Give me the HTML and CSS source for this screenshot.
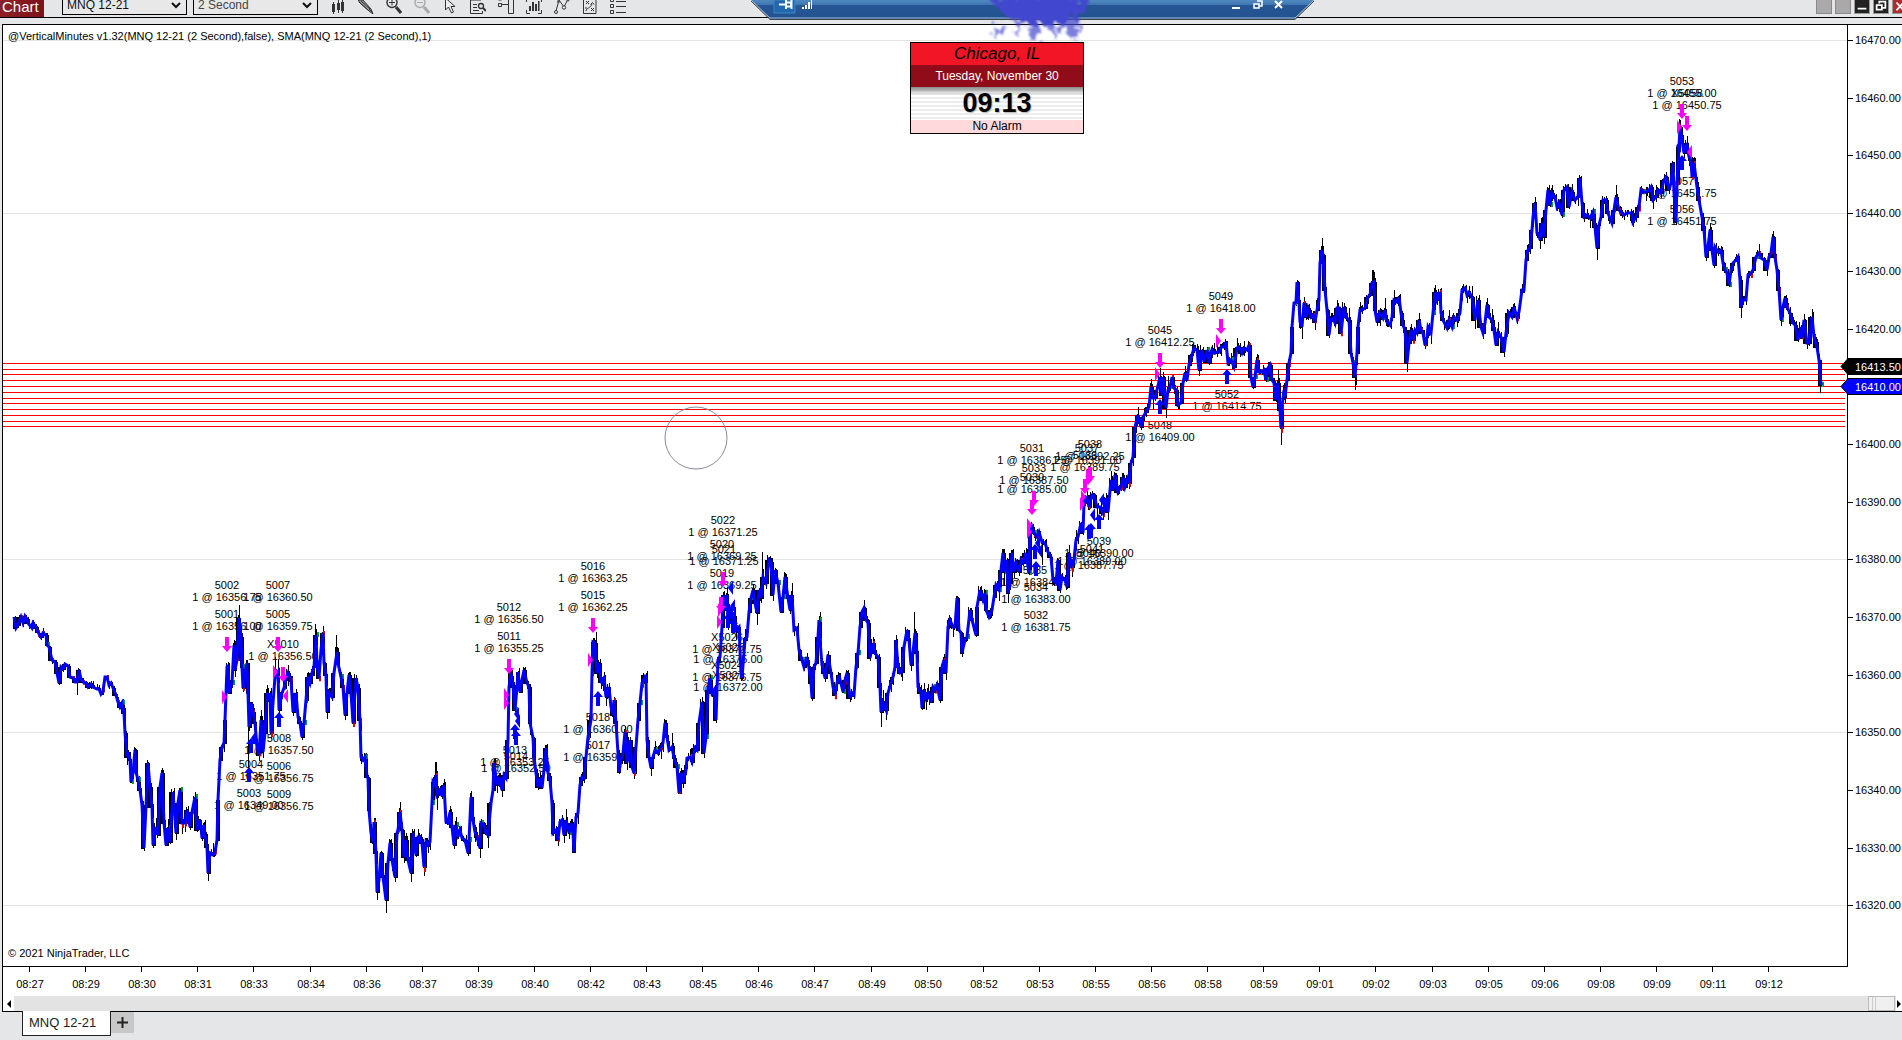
FILE: index.html
```html
<!DOCTYPE html>
<html lang="en">
<head>
<meta charset="utf-8">
<title>Chart - MNQ 12-21</title>
<link rel="stylesheet" href="styles.css">
</head>
<body>
<header class="toolbar">
  <h1 class="brand">Chart</h1>
  <div class="picker picker-first">
    <select aria-label="Instrument"><option>MNQ 12-21</option></select>
    <svg width="10" height="7" viewBox="0 0 10 7"><path d="M1 1l4 4 4-4" fill="none" stroke="#111" stroke-width="2"/></svg>
  </div>
  <div class="picker picker-muted">
    <select aria-label="Interval"><option>2 Second</option></select>
    <svg width="10" height="7" viewBox="0 0 10 7"><path d="M1 1l4 4 4-4" fill="none" stroke="#111" stroke-width="2"/></svg>
  </div>
  <nav class="tools" aria-label="Chart tools">
    <button aria-label="Bar style"><svg viewBox="0 0 16 14"><path d="M3.500 2v12M8.500 0v13M12.500 0v13" stroke="#333"/><path d="M2 4h3v8H2zM7 3h3v7H7zM11 2h3v9h-3z" fill="#333"/></svg></button>
    <button aria-label="Draw"><svg viewBox="0 0 16 14"><path d="M0 0l2 3 9 8 4 3-2-5L5 0z" fill="#999" stroke="#333"/><path d="M3 1l9 8M1 2l9 8M11 9l4 4" stroke="#333" fill="none"/></svg></button>
    <button aria-label="Zoom in"><svg viewBox="0 0 16 14"><circle cx="6" cy="2.500" r="5" fill="none" stroke="#333" stroke-width="1.400"/><path d="M3 2.500h6M6 0v5.500" stroke="#333"/><path d="M10 7l5 6" stroke="#333" stroke-width="3"/></svg></button>
    <button aria-label="Zoom out" disabled><svg viewBox="0 0 16 14"><circle cx="6" cy="2.500" r="5" fill="none" stroke="#aaa" stroke-width="1.400"/><path d="M3 2.500h6" stroke="#aaa"/><path d="M10 7l5 6" stroke="#aaa" stroke-width="3"/></svg></button>
    <button aria-label="Pointer"><svg viewBox="0 0 16 14"><path d="M3.500-2v12l3-3 3 6 2-1-2.500-5.500h4z" fill="#eee" stroke="#333"/></svg></button>
    <button aria-label="Data box"><svg viewBox="0 0 16 14"><path d="M11 0H.500v13.500h12V11M3 4.500h4M3 7.500h4M3 10.500h6" fill="none" stroke="#333"/><circle cx="11" cy="6" r="2.500" fill="none" stroke="#333" stroke-width="1.300"/><path d="M13 8l3 3" stroke="#333" stroke-width="2"/></svg></button>
    <button aria-label="Chart trader"><svg viewBox="0 0 16 14"><path d="M.500 3.500h3v3h-3zM.500-2v2h3v-2M4 4.500h6M10.500-1h5v14.500h-5z" fill="none" stroke="#333"/></svg></button>
    <button aria-label="Indicators"><svg viewBox="0 0 16 14"><path d="M.500 10v3.500H4M12 13.500h3.500V10M.500 2V0M15.500 2V0" fill="none" stroke="#333"/><path d="M3 6h2v5H3zM6 2h2v9H6zM9 4h2v7H9zM12 1h1.500v10H12z" fill="#333"/></svg></button>
    <button aria-label="Trend line"><svg viewBox="0 0 16 14"><path d="M2 11l3-11 5 7 4-8" fill="none" stroke="#333"/><circle cx="2" cy="12" r="1.500" fill="#eee" stroke="#333"/><circle cx="4.500" cy="1.500" r="1.500" fill="#555"/><circle cx="10" cy="7.500" r="1.700" fill="#eee" stroke="#333"/><circle cx="14" cy="0" r="1.500" fill="#555"/></svg></button>
    <button aria-label="Strategies"><svg viewBox="0 0 16 14"><path d="M1.500-1h12.500v14.500H1.500z" fill="none" stroke="#333"/><path d="M4 1l3 3M7 1L4 4M9 8l3 3M12 8l-3 3M4 11c0-3 5-3 6-7M8.500 4.500l2-2 1.500 2M4 7v2" fill="none" stroke="#333"/></svg></button>
    <button aria-label="Properties"><svg viewBox="0 0 16 14"><path d="M.500-1h3v2.500h-3zM.500 4.500h3v3h-3zM.500 10.500h3v3h-3z" fill="none" stroke="#333"/><path d="M6 1.500h10M6 6.500h10M6 12.500h10" stroke="#333"/></svg></button>
  </nav>
  <div class="window-buttons">
    <button class="plain" aria-label="Link instrument"></button>
    <button class="plain" aria-label="Link interval"></button>
    <button aria-label="Minimize"><svg viewBox="0 0 16 16"><path d="M3 11h10" stroke="#fff" stroke-width="2"/></svg></button>
    <button aria-label="Restore"><svg viewBox="0 0 16 16"><path d="M6 5V3h7v7h-3M3 7h6v5H3z" fill="none" stroke="#fff" stroke-width="2"/></svg></button>
    <button class="close" aria-label="Close"><svg viewBox="0 0 16 16"><path d="M4 4l8 9M12 4l-8 9" stroke="#fff" stroke-width="2"/></svg></button>
  </div>
</header>

<main class="chart">
  <svg id="plot" class="plot" role="img" aria-label="MNQ 12-21 two second price chart"></svg>
  <p class="note note-top">@VerticalMinutes v1.32(MNQ 12-21 (2 Second),false), SMA(MNQ 12-21 (2 Second),1)</p>
  <p class="note note-bottom">© 2021 NinjaTrader, LLC</p>
</main>

<div class="scroll">
  <button aria-label="Scroll left"><svg width="6" height="8"><path d="M5 0v8L1 4z"/></svg></button>
  <span class="thumb"></span>
  <button aria-label="Scroll right"><svg width="6" height="8"><path d="M1 0v8l4-4z"/></svg></button>
</div>

<footer class="tabs">
  <button class="tab">MNQ 12-21</button>
  <button class="add" aria-label="Add tab"><svg width="11" height="11"><path d="M5.500 0v11M0 5.500h11" stroke="#222" stroke-width="2"/></svg></button>
</footer>

<div class="remote-bar">
  <svg width="564" height="44" viewBox="0 0 564 44">
    <defs>
      <linearGradient id="steel" x1="0" y1="0" x2="0" y2="1">
        <stop offset="0" stop-color="#5088c0"/><stop offset=".26" stop-color="#3f76b0"/><stop offset=".28" stop-color="#265694"/><stop offset="1" stop-color="#235290"/>
      </linearGradient>
      <filter id="ink" x="-20%" y="-20%" width="140%" height="160%">
        <feTurbulence type="fractalNoise" baseFrequency=".13" numOctaves="3" seed="5"/>
        <feDisplacementMap in="SourceGraphic" scale="22"/>
        <feGaussianBlur stdDeviation="1"/>
      </filter>
    </defs>
    <path d="M0 0l19 19h525l19-19z" fill="url(#steel)"/>
    <path d="M0 0l19 18h525l19-18" fill="none" stroke="#9dbbdc"/>
    <path d="M0 1l19 18.500h525L563 1" fill="none" stroke="#444"/>
    <path d="M23 0h21v13H23z" fill="#2268ad" stroke="#3c85c8"/>
    <path d="M28 4.500h6M35 0v9M35 2.500h5v4h-5M40.500 0v9" fill="none" stroke="#fff" stroke-width="2"/>
    <path d="M51 9h2V7h-2zM54 9h2V5h-2zM57 9h2V2h-2zM60 9h1V0h-1z" fill="#fff"/>
    <path d="M481 8h8" stroke="#fff" stroke-width="2"/>
    <path d="M506 1h5v5h-3M503 4h5v4h-5z" fill="none" stroke="#fff" stroke-width="1.500"/>
    <path d="M524 1l7 7M531 1l-7 7" stroke="#fff" stroke-width="2"/>
    <g filter="url(#ink)" fill="#4347cf">
      <path d="M234-4h104l-8 14-8 8-10 6-22 2-16-5-16-1-6-8z"/>
      <path d="M246 22l8 2-4 12-8 2zM264 22h7l-2 12-5 1zM278 22h11l-2 17-8 1zM296 21h8l4 10-7 6zM312 18h12l4 16-10 4zM326 22l7 5-3 10z" opacity=".7"/>
    </g>
  </svg>
</div>

<aside class="clock">
  <p class="city">Chicago, IL</p>
  <p class="date">Tuesday, November 30</p>
  <p class="time">09:13</p>
  <p class="alarm">No Alarm</p>
</aside>

<script src="chart.js"></script>
</body>
</html>
```
FILE: styles.css
```css
* { box-sizing: border-box; }
body {
  margin: 0;
  height: 100vh;
  overflow: hidden;
  display: flex;
  flex-direction: column;
  position: relative;
  background: #e5e6e8;
  color: #000;
  font-family: "Liberation Sans", Arial, sans-serif;
  font-size: 11px;
}
p, h1 { margin: 0; }
button { padding: 0; border: 0; background: none; font: inherit; color: inherit; }

.toolbar {
  flex: none;
  height: 18px;
  display: flex;
  align-items: flex-end;
  border-bottom: 1px solid #000;
  overflow: hidden;
}
.brand {
  width: 44px;
  height: 17px;
  padding-left: 2px;
  font-size: 15px;
  font-weight: 400;
  line-height: 13px;
  color: #fff;
  background: linear-gradient(90deg, #8e1f27, #7c1219);
}
.picker {
  display: grid;
  align-items: center;
  margin: 0 0 2px 6px;
  width: 125px;
  height: 20px;
}
.picker-first { margin-left: 18px; }
.picker select, .picker svg { grid-area: 1 / 1; }
.picker svg { justify-self: end; margin-right: 6px; pointer-events: none; }
.picker select {
  appearance: none;
  width: 100%;
  height: 20px;
  padding: 0 4px;
  border: 1px solid #000;
  border-radius: 0;
  background: #e8e8e9;
  color: #111;
  font: 12px "Liberation Sans", Arial, sans-serif;
}
.picker-muted select { color: #444; }
.tools { display: flex; margin: 0 0 3px 6px; }
.tools button { width: 28px; height: 14px; display: grid; place-items: center; }
.tools svg { width: 16px; height: 14px; display: block; }
.window-buttons { display: flex; gap: 3px; margin: 0 -6px 3px auto; }
.window-buttons button { width: 16px; height: 16px; border: 1px solid #999; background: #222; }
.window-buttons svg { display: block; width: 14px; height: 14px; }
.window-buttons .plain { background: #aaa8a8; border-color: #8a8a8a; }
.window-buttons .close { background: #b02a30; }

.chart {
  flex: 1;
  min-height: 0;
  position: relative;
  margin: 6px 0 0 2px;
  border: 1px solid #000;
  border-width: 1px 0 0 1px;
  background: #fff;
}
.plot { display: block; width: 100%; height: 100%; }
.plot text { font-size: 11px; }
.note { position: absolute; left: 5px; line-height: 13px; }
.note-top { top: 5px; }
.note-bottom { bottom: 36px; }

.scroll {
  flex: none;
  height: 16px;
  margin-left: 2px;
  display: flex;
  align-items: stretch;
  border: 1px solid #000;
  border-width: 0 0 1px 1px;
  background: #e3e3e3;
}
.scroll button { width: 11px; background: #fff; display: grid; place-items: center; }
.scroll button:last-child { width: 6px; }
.thumb {
  width: 27px;
  margin: 0 1px 0 auto;
  border: 1px solid #bbb;
  background: linear-gradient(90deg, transparent 3px, #ccc 3px, #ccc 4px, transparent 4px, transparent 6px, #ccc 6px, #ccc 7px, transparent 7px) #f0f0f0;
}

.tabs { flex: none; height: 28px; display: flex; align-items: flex-start; padding-left: 22px; }
.tab {
  width: 89px;
  height: 25px;
  margin-top: -1px;
  padding: 0 0 2px 6px;
  border: 1px solid #222;
  border-top: 0;
  background: #fff;
  font-size: 13px;
  text-align: left;
  color: #222;
}
.add { width: 23px; height: 21px; background: #c8c8c8; display: grid; place-items: center; }

.remote-bar { position: absolute; left: 39.5%; top: 0; height: 44px; }
.remote-bar svg { display: block; }

.clock {
  position: absolute;
  left: 47.85%;
  top: 42px;
  width: 174px;
  border: 1px solid #000;
  text-align: center;
}
.city { background: #f21525; font-size: 17px; line-height: 22px; font-style: italic; }
.date { background: #900c18; color: #fff; font-size: 12px; line-height: 22px; }
.time {
  font-size: 27px;
  font-weight: 700;
  line-height: 33px;
  text-shadow: 1px 1px 1px #bbb;
  background:
    linear-gradient(#888, rgba(255,255,255,0) 8px),
    repeating-linear-gradient(#fff 0 2px, #ececec 2px 4px);
}
.alarm { background: #ffd9dc; font-size: 12px; line-height: 13px; }
```
FILE: chart.js
```javascript
// Design size of the drawing area, and the window position of its corner.
const BASE = { w: 1899, h: 971, x: 3, y: 25 };

// Price path in thirds of a unit, measured from each segment's origin.
const SEGMENTS = [
  { x: 0, y: 560, pts: `42,172 47,203 55,195 62,170 70,188 74,168 80,178 85,190 95,205 100,188 108,200 115,215 122,232 130,220 137,225 142,255 148,262 155,300 165,305 170,340 177,370 182,320 190,328 195,312 203,318 210,350 218,355 225,365 230,366 236,330 242,358 250,365 258,370 265,382 272,372 280,380 290,388 297,388 303,402 308,392 315,350 322,352 328,375 333,368 340,385 348,405 355,425 360,440 366,428 372,460 376,520 381,590 385,575 389,600 393,665 398,640 405,570 409,635 415,660 420,690 426,735 432,865 437,740 444,610 450,680 456,740 460,855 467,800 474,825 480,680 487,640 492,790 498,855 504,805 511,845 518,695 527,820 533,730 541,690 547,790 556,790 562,750 570,800 576,755 584,710 590,810 596,780 602,800 607,835 611,795 616,825 620,860 623,940 629,878 638,885 645,875 650,840 654,720 660,600 666,560 672,550 676,480 680,320 684,315 688,400 695,370 702,255 706,330 712,300 717,175 722,230 727,320 730,385 735,340 740,310 744,400 748,500 754,430 760,455 766,490 771,560 777,585 782,480 788,575 795,520 801,400 806,420 809,400 813,520 818,430 825,350 834,335 838,450 845,400 852,385 858,355 865,340 872,360 880,455 887,400 893,470 900,490 906,530 912,490 917,420 925,350 930,370 935,340 942,320 947,225 952,310 957,355 962,270 968,220 972,310 977,345 982,455 988,400 996,410 1003,340 1010,275 1015,310 1022,350 1030,380 1035,465 1040,400 1048,345 1053,400 1060,490 1067,355 1075,385 1080,480 1084,590 1090,600 1095,590 1100,650 1104,655 1108,750 1113,820 1118,845 1122,785 1127,880 1132,995 1138,960 1143,880 1150,950 1158,1020 1163,910 1170,850 1175,900 1184,950 1190,820 1195,810 1200,755 1206,810 1211,890 1217,840 1225,900 1232,940 1240,820 1247,885 1255,830` },
  { x: 400, y: 540, pts: `60,890 66,910 72,980 78,905 84,915 90,905 95,790 98,725 105,735 108,705 112,765 120,750 125,768 132,735 138,845 145,850 150,815 156,860 161,915 167,855 175,885 181,870 187,895 195,900 204,940 208,900 213,770 218,840 225,875 232,890 239,925 244,850 252,855 258,880 265,885 272,790 278,750 282,670 290,735 297,710 306,750 312,705 318,715 323,600 327,440 333,400 340,435 345,510 350,440 355,395 360,455 366,420 373,390 380,430 386,440 391,550 398,595 403,650 409,700 414,740 420,715 425,745 432,690 438,625 443,700 450,720 455,790 460,880 468,870 474,900 480,845 487,840 492,885 498,840 507,880 514,850 519,880 523,935 527,830 534,820 540,735 546,710 552,715 558,650 565,590 572,540 577,400 580,305 586,310 591,400 596,370 602,425 608,430 613,410 618,470 628,440 634,500 638,525 643,480 649,550 653,640 658,695 664,660 670,640 676,575 682,670 690,600 697,680 703,700 709,620 714,540 720,490 727,430 737,405 741,600 748,650 754,685 760,650 766,630 774,640 782,625 790,610 796,550 802,590 808,630 815,620 822,655 830,680 836,760 843,700 850,730 857,690 862,655 870,650 876,665 884,625 892,630 897,550 905,485 912,640 918,590 924,450 930,415 937,460 943,450 949,540 955,360 961,350 966,260 970,165 975,210 980,165 985,250 992,200 998,260 1003,215 1008,270 1016,260 1022,400 1027,415 1034,300 1040,290 1046,215 1052,175 1058,150 1064,190 1070,220 1076,150 1084,175 1090,110 1098,130 1106,60 1112,65 1120,165 1126,90 1134,130 1144,215 1149,170 1155,110 1163,175 1170,210 1176,165 1183,270 1190,265 1198,330 1205,360 1212,380 1220,350 1227,385 1233,430 1236,475 1241,380 1247,370 1253,290` },
  { x: 800, y: 420, pts: `57,600 60,660 65,735 72,760 76,775 80,730 85,705 92,760 98,800 104,825 112,790 118,765 128,815 135,780 142,760 150,835 156,820 163,825 168,740 174,700 180,620 186,575 193,565 198,600 205,610 211,715 218,670 226,700 235,710 239,800 242,875 250,850 258,870 265,820 272,790 278,770 284,740 288,660 293,740 300,760 306,755 312,680 320,630 328,660 333,735 338,700 345,640 350,700 355,800 362,820 367,865 373,810 378,835 385,820 393,845 399,800 405,810 412,795 420,840 426,740 432,720 438,760 445,620 450,600 460,620 464,620 470,535 476,630 482,640 487,700 494,660 502,650 510,570 517,600 527,645 532,560 540,510 548,540 554,520 558,570 568,590 576,570 582,530 588,495 598,510 603,450 608,400 613,455 620,420 625,520 630,490 635,400 641,455 648,430 656,455 662,420 670,430 678,400 687,460 690,340 695,320 703,340 710,350 718,335 725,365 735,370 745,395 752,410 760,480 768,490 773,420 779,510 787,470 795,480 802,500 808,400 815,440 822,420 828,360 835,350 842,310 848,340 852,250 860,235 868,260 875,225 882,225 890,260 900,260 908,280 918,235 925,275 932,180 938,210 945,165 953,215 962,200 968,170 975,200 983,175 988,190 993,130 998,110 1004,20` },
  { x: 1100, y: 230, pts: `108,580 115,555 124,590 130,560 138,545 146,530 152,470 158,505 166,505 172,480 180,440 186,495 190,440 198,535 204,480 210,470 216,440 222,475 228,480 233,525 242,520 250,460 256,430 262,450 268,405 275,375 282,355 290,360 298,420 305,360 312,395 320,360 328,400 336,360 342,370 350,365 358,365 364,350 372,350 378,335 384,400 392,390 402,410 410,355 418,350 425,370 433,355 440,360 446,345 452,440 458,470 464,440 470,390 476,425 486,425 493,420 499,450 505,415 511,405 516,450 522,460 527,510 533,460 539,540 543,595 547,530 551,480 556,500 561,450 566,400 572,370 577,290 582,220 587,215 591,155 596,220 601,275 606,290 612,220 618,260 625,235 632,260 640,255 646,275 650,240 656,210 661,100 666,60 670,75 675,180 680,240 688,315 694,270 700,265 706,280 712,235 718,235 724,310 732,230 738,260 747,270 752,370 758,400 766,440 771,370 773,290 780,240 787,240 795,235 803,200 810,195 816,160 821,155 826,240 832,275 840,250 848,265 855,240 862,275 870,285 877,260 883,210 890,215 897,200 902,250 908,285 914,300 920,400 926,340 933,300 939,330 945,300 951,310 957,270 963,300 970,310 974,345 980,320 984,290 992,310 998,250 1004,185 1012,210 1019,185 1024,250 1030,270 1040,295 1047,270 1055,290 1063,260 1072,270 1080,250 1086,180 1095,175 1100,195 1108,185 1117,200 1125,270 1134,210 1142,290 1149,310 1156,280 1161,225 1168,260 1175,270 1182,300 1188,345 1195,305 1203,320 1211,365 1218,310` },
  { x: 1480, y: 60, pts: `86,760 95,770 102,740 110,775 118,755 125,690 132,690 138,600 144,570 150,565 155,510 160,470 165,430 170,520 176,525 181,540 187,490 192,530 198,450 203,390 210,435 216,400 224,410 230,440 238,430 247,465 252,390 260,380 267,440 276,395 284,420 293,410 300,355 306,430 313,470 320,465 330,475 338,455 345,500 352,565 358,495 364,470 370,420 377,420 385,460 395,490 402,450 408,410 417,450 424,455 432,465 440,460 450,460 457,460 460,485 468,470 476,440 482,390 490,395 498,395 506,390 512,380 520,420 528,410 535,390 543,400 552,360 558,350 566,390 573,370 578,310 582,400 587,485 592,370 597,260 601,200 606,240 612,280 620,250 628,290 634,300 637,350 643,310 650,380 658,420 665,470 673,510 678,590 684,560 690,510 695,570 701,615 706,560 714,575 722,570 728,610 734,630 740,640 747,675 753,630 760,610 767,600 775,590 779,660 783,740 790,720 797,720 803,645 812,640 820,630 828,590 836,580 844,595 852,600 861,630 868,590 874,580 880,530 884,590 890,630 897,690 903,780 908,740 915,715 922,740 930,760 938,790 945,795 955,840 963,800 967,835 972,780 980,850 988,850 996,770 1001,830 1010,860 1016,900 1022,975` }
];

// Long wicks: x, top, bottom.
const WICKS = [
  [239, 605, 620], [248, 720, 768], [275, 657, 672], [315, 624, 640], [336, 635, 655], [386, 895, 913], [77, 675, 695],
  [411, 860, 881], [435, 762, 775], [596, 632, 640], [762, 552, 575], [881, 700, 727], [914, 612, 635],
  [1042, 543, 565], [1281, 425, 445], [1322, 238, 252], [1373, 270, 283], [1356, 375, 385], [1679, 119, 130],
  [1597, 243, 260], [1741, 302, 318], [1773, 231, 237], [1820, 380, 393], [1812, 309, 318], [820, 612, 625]
];

// Executions: centre x, baseline of the id line, id, price.
const FILLS = [
  [227, 589, '5002', '16356.75'], [227, 618, '5001', '16356.00'], [278, 589, '5007', '16360.50'], [278, 618, '5005', '16359.75'],
  [283, 648, 'X5010', '16356.50'], [279, 742, '5008', '16357.50'], [279, 770, '5006', '16356.75'], [279, 798, '5009', '16356.75'],
  [251, 768, '5004', '16351.75'], [249, 797, '5003', '16349.00'], [509, 611, '5012', '16356.50'], [509, 640, '5011', '16355.25'],
  [593, 570, '5016', '16363.25'], [593, 599, '5015', '16362.25'], [515, 754, '5013', '16353.25'], [516, 760, '5014', '16352.50'],
  [598, 721, '5018', '16360.00'], [598, 749, '5017', '16359.75'], [723, 524, '5022', '16371.25'], [722, 548, '5020', '16369.25'],
  [724, 553, '5021', '16371.25'], [722, 577, '5019', '16369.25'], [727, 641, 'X5026', '16371.75'], [728, 651, 'X5025', '16375.00'],
  [727, 669, 'X5024', '16376.75'], [728, 679, 'X5027', '16372.00'], [1032, 452, '5031', '16386.25'], [1034, 472, '5033', '16387.50'],
  [1032, 481, '5030', '16385.00'], [1090, 448, '5038', '16392.25'], [1087, 452, '5037', '16391.00'], [1085, 459, '5036', '16389.75'],
  [1035, 574, '5035', '16384.75'], [1036, 591, '5034', '16383.00'], [1036, 619, '5032', '16381.75'], [1099, 545, '5039', '16390.00'],
  [1092, 553, '5041', '16389.00'], [1089, 557, '5040', '16387.75'], [1160, 429, '5048', '16409.00'], [1160, 334, '5045', '16412.25'],
  [1221, 300, '5049', '16418.00'], [1227, 398, '5052', '16414.75'], [1682, 85, '5053', '16455.00'], [1687, 97, 'X5058', '16450.75'],
  [1682, 185, '5057', '16451.75'], [1682, 213, '5056', '16451.75']
];

// Arrows: centre x, top. Triangles: flat side x, centre y.
const DOWN = [[227, 637], [278, 637], [283, 667], [509, 659], [593, 618], [723, 572], [721, 597], [1034, 491], [1032, 500], [1090, 467], [1088, 470], [1085, 479], [1160, 353], [1221, 319], [1682, 104], [1687, 116]];
const UP = [[251, 738], [249, 767], [279, 712], [515, 724], [516, 730], [598, 691], [728, 613], [733, 618], [1035, 544], [1036, 561], [1091, 523], [1089, 524], [1099, 514], [1160, 399], [1227, 369], [1682, 155]];
const RIGHT = [[222, 697], [273, 672], [504, 695], [504, 703], [588, 660], [717, 622], [718, 610], [1027, 525], [1027, 532], [1081, 497], [1080, 504], [1155, 374], [1216, 341], [1677, 127]];
const LEFT = [[288, 696, '#f0f'], [1692, 152, '#f0f'], [519, 714], [520, 721], [733, 588], [735, 606], [605, 681], [1040, 543], [1042, 551], [1095, 515], [1104, 500], [256, 738], [1681, 146]];

const LEVELS = [363, 369, 374, 380, 386, 392, 398, 403, 409, 415, 421, 426];
const TIMES = '08:27 08:29 08:30 08:31 08:33 08:34 08:36 08:37 08:39 08:40 08:42 08:43 08:45 08:46 08:47 08:49 08:50 08:52 08:53 08:55 08:56 08:58 08:59 09:01 09:02 09:03 09:05 09:06 09:08 09:09 09:11 09:12'.split(' ');

function draw() {
  const svg = document.getElementById('plot');
  const W = svg.clientWidth, H = svg.clientHeight;
  const X = v => Math.round((v - BASE.x) * W / BASE.w);
  const Y = v => Math.round((v - BASE.y) * H / BASE.h);
  let seed = 7;
  const rnd = () => (seed = (seed * 16807) % 2147483647) / 2147483647;
  const out = [];
  const line = (x1, y1, x2, y2, c) => out.push(`<path d="M${x1} ${y1}L${x2} ${y2}" stroke="${c}" shape-rendering="crispEdges"/>`);
  const h = (x1, x2, y, c) => line(x1, y + .5, x2, y + .5, c);
  const text = (x, y, s, extra = '') => out.push(`<text x="${x}" y="${y}" ${extra}>${s}</text>`);
  const edge = X(1847), floor = Y(966);

  [40, 213, 559, 732, 905].forEach(y => h(0, edge, Y(y), '#e3e3e3'));

  FILLS.forEach(([x, y, id, price]) => {
    text(X(x), Y(y), id, 'text-anchor="middle"');
    text(X(x), Y(y) + 12, '1 @ ' + price, 'text-anchor="middle"');
  });
  LEVELS.forEach(y => h(0, X(1845), Y(y), '#f00'));

  const path = [];
  SEGMENTS.forEach(s => s.pts.split(' ').forEach(p => {
    const [a, b] = p.split(',').map(Number);
    path.push([X(s.x + a / 3), Y(s.y + b / 3)]);
  }));
  let bars = '', wicks = '', up = '', down = '';
  for (let i = 1; i < path.length; i++) {
    const [x, y] = path[i], [px, py] = path[i - 1];
    const calm = x < 120 ? .4 : 1;
    const top = Math.min(y, py), bot = Math.max(y, py);
    if (i % 2) bars += `M${px - 1} ${top}h4v${bot - top + 1}h-4z`;
    wicks += `M${x + .5} ${y - rnd() * rnd() * 14 * calm - 1}V${y + rnd() * rnd() * 14 * calm + 1}`;
    wicks += `M${px + 1.5} ${top - rnd() * 5 * calm}V${Math.min(bot, top + 8) + rnd() * 4 * calm}`;
    if (rnd() < .13) down += `M${x} ${y - 2}h2v${3 + rnd() * 4}h-2z`;
    if (rnd() < .07) up += `M${x + 1} ${y - 3}h2v5h-2z`;
  }
  WICKS.forEach(([x, a, b]) => { wicks += `M${X(x) + .5} ${Y(a)}V${Y(b)}`; });
  const blue = 'M' + path.map(p => p.join(' ')).join('L');
  out.push(`<path d="${bars}" shape-rendering="crispEdges"/><path d="${wicks}" stroke="#000" shape-rendering="crispEdges"/>`);
  out.push(`<path d="${down}" fill="#e00000"/><path d="${up}" fill="#00a030"/>`);
  out.push(`<path d="${blue}" fill="none" stroke="#00f" stroke-width="3"/>`);

  DOWN.forEach(([x, y]) => out.push(`<path transform="translate(${X(x)} ${Y(y)})" d="M-2 0h4v9h3l-5 6-5-6h3z" fill="#f0f"/>`));
  RIGHT.forEach(([x, y]) => out.push(`<path transform="translate(${X(x)} ${Y(y)})" d="M0-7l5 7-5 7z" fill="#f0f"/>`));
  UP.forEach(([x, y]) => out.push(`<path transform="translate(${X(x)} ${Y(y)})" d="M-2 15h4V6h3L0 0l-5 6h3z" fill="#00f"/>`));
  LEFT.forEach(([x, y, c = '#00f']) => out.push(`<path transform="translate(${X(x)} ${Y(y)})" d="M0-7l-5 7 5 7z" fill="${c}"/>`));

  out.push(`<circle cx="${X(696)}" cy="${Y(438)}" r="31" fill="none" stroke="#8a8a9c"/>`);

  line(edge + .5, 0, edge + .5, floor, '#000');
  h(0, edge + 1, floor, '#000');
  for (let p = 16470; p >= 16320; p -= 10) {
    if (p === 16410) continue;
    const y = Y(40 + (16470 - p) * 5.77);
    h(edge, edge + 6, y, '#000');
    text(edge + 8, y + 4, p + '.00');
  }
  [['16413.50', 366, '#000'], ['16410.00', 386, '#00f']].forEach(([s, y, c]) => {
    out.push(`<path d="M${edge - 6} ${Y(y) + .5}l7-8H${W + 2}v16H${edge + 1}z" fill="${c}" stroke="#000"/>`);
    text(edge + 8, Y(y) + 5, s, 'fill="#fff"');
  });
  TIMES.forEach((t, i) => {
    const x = X(29 + i * 56.1);
    line(x + .5, floor, x + .5, floor + 6, '#000');
    text(x + 1, floor + 22, t, 'text-anchor="middle"');
  });
  svg.innerHTML = out.join('');
}
draw();
addEventListener('resize', draw);
```
